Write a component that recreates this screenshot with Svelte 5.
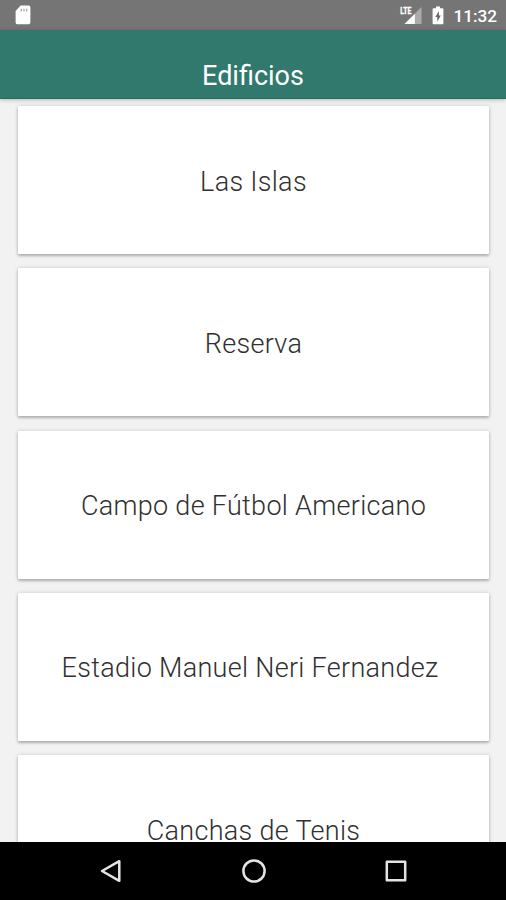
<script>
    const edificios = [
        'Las Islas',
        'Reserva',
        'Campo de Fútbol Americano',
        'Estadio Manuel Neri Fernandez\u00a0',
        'Canchas de Tenis'
    ];
</script>

<div class="screen">
    <div class="status-bar">
        <svg class="sd-card" width="16" height="20" viewBox="0 0 16 20">
            <path d="M5.6 0.5H13.6a1.8 1.8 0 0 1 1.8 1.8V17.4a1.8 1.8 0 0 1-1.8 1.8H2.4a1.8 1.8 0 0 1-1.8-1.8V6z" fill="#fff" />
            <path d="M6.3 3.8v2.6M9 3.8v2.6M11.7 3.8v2.6" stroke="#a5a5a5" stroke-width="1.3" />
        </svg>
        <div class="status-right">
            <svg class="signal" width="22" height="19" viewBox="0 0 22 19">
                <path d="M21.5 1V18H4.5z" fill="#ababab" />
                <path d="M14.8 7.7V18H4.5z" fill="#fff" />
                <text x="0.3" y="8.3" textLength="11" lengthAdjust="spacingAndGlyphs">LTE</text>
            </svg>
            <svg class="battery" width="12" height="19" viewBox="0 0 12 19">
                <path d="M4 0.5h4v1.8h2.4a1 1 0 0 1 1 1V17.3a1 1 0 0 1-1 1H1.6a1 1 0 0 1-1-1V3.3a1 1 0 0 1 1-1H4z" fill="#fff" />
                <path d="M6.9 5L3.3 11.1H5.3V15.7L8.8 9.4H6.9z" fill="#666" />
            </svg>
            <span class="clock">11:32</span>
        </div>
    </div>

    <header>
        <h1>Edificios</h1>
    </header>

    <main>
        {#each edificios as nombre}
            <div class="card">{nombre}</div>
        {/each}
    </main>

    <nav>
        <svg width="24" height="26" viewBox="0 0 24 26">
            <path d="M20.3 3.2V22.8L3 13z" />
        </svg>
        <svg width="26" height="26" viewBox="0 0 26 26">
            <circle cx="13" cy="13" r="10.6" />
        </svg>
        <svg width="24" height="26" viewBox="0 0 24 26">
            <rect x="2.8" y="3.8" width="18.4" height="18.4" />
        </svg>
    </nav>
</div>

<style>
    .screen {
        display: flex;
        flex-direction: column;
        width: 506px;
        height: 900px;
        overflow: hidden;
        background: #f2f2f2;
        font-family: Roboto, sans-serif;
    }

    .status-bar {
        display: flex;
        flex: none;
        align-items: center;
        justify-content: space-between;
        box-sizing: border-box;
        height: 30px;
        padding: 0 9px 0 15px;
        background: #757575;
        color: #fff;
    }

    .status-right {
        display: flex;
        align-items: center;
    }

    .signal {
        overflow: visible;
    }

    .signal text {
        fill: #fff;
        stroke: #fff;
        stroke-width: 0.4;
        font-size: 9.5px;
        font-weight: 700;
    }

    .battery {
        margin: 0 9px 0 10px;
    }

    .clock {
        padding-top: 2px;
        font-size: 17.2px;
        font-weight: 500;
        line-height: 24px;
    }

    header {
        flex: none;
        box-sizing: border-box;
        height: 69px;
        padding-top: 30px;
        background: #31796d;
        border-bottom: 1px solid #266b60;
        box-shadow: 0 1px 4px rgba(0, 0, 0, 0.25);
        z-index: 1;
    }

    h1 {
        margin: 0;
        color: #fff;
        font-size: 27px;
        font-weight: 400;
        line-height: 32px;
        text-align: center;
    }

    main {
        display: flex;
        flex: 1;
        flex-direction: column;
        gap: 14.3px;
        min-height: 0;
        padding: 7px 17px 0 18px;
        overflow: hidden;
    }

    .card {
        display: flex;
        flex: none;
        align-items: center;
        justify-content: center;
        box-sizing: border-box;
        height: 148px;
        padding-top: 3px;
        background: #fff;
        border-radius: 1px;
        box-shadow: 0 2px 3px rgba(0, 0, 0, 0.24), 0 0 4px rgba(0, 0, 0, 0.14);
        color: #303030;
        font-size: 27px;
        font-weight: 300;
        letter-spacing: 0.3px;
        white-space: nowrap;
    }

    nav {
        display: flex;
        flex: none;
        align-items: center;
        justify-content: space-between;
        box-sizing: border-box;
        height: 58px;
        padding: 0 98px 0 99px;
        background: #000;
    }

    nav svg {
        fill: none;
        stroke: #e4e4e4;
        stroke-width: 2.5;
        stroke-linejoin: round;
    }
</style>
